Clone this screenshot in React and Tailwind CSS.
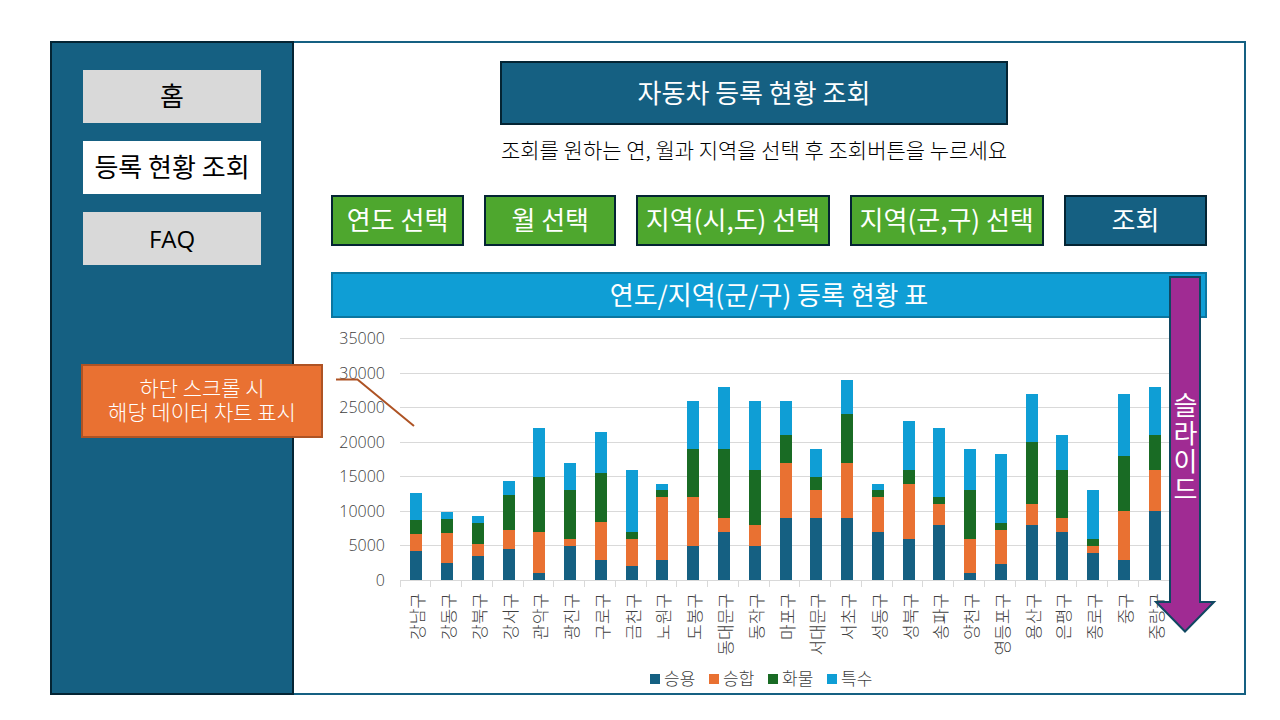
import React from "react";

const SERIES = [
  { name: "승용", color: "#156082" },
  { name: "승합", color: "#E97132" },
  { name: "화물", color: "#196B24" },
  { name: "특수", color: "#0F9ED5" },
];

const DISTRICTS = [
  ["강남구", 4300, 2400, 2000, 3900],
  ["강동구", 2500, 4400, 2000, 1000],
  ["강북구", 3500, 1800, 3000, 1000],
  ["강서구", 4500, 2800, 5000, 2000],
  ["관악구", 1000, 6000, 8000, 7000],
  ["광진구", 5000, 1000, 7000, 4000],
  ["구로구", 3000, 5500, 7000, 6000],
  ["금천구", 2000, 4000, 1000, 9000],
  ["노원구", 3000, 9000, 1000, 1000],
  ["도봉구", 5000, 7000, 7000, 7000],
  ["동대문구", 7000, 2000, 10000, 9000],
  ["동작구", 5000, 3000, 8000, 10000],
  ["마포구", 9000, 8000, 4000, 5000],
  ["서대문구", 9000, 4000, 2000, 4000],
  ["서초구", 9000, 8000, 7000, 5000],
  ["성동구", 7000, 5000, 1000, 1000],
  ["성북구", 6000, 8000, 2000, 7000],
  ["송파구", 8000, 3000, 1000, 10000],
  ["양천구", 1000, 5000, 7000, 6000],
  ["영등포구", 2300, 5000, 1000, 10000],
  ["용산구", 8000, 3000, 9000, 7000],
  ["은평구", 7000, 2000, 7000, 5000],
  ["종로구", 4000, 1000, 1000, 7000],
  ["중구", 3000, 7000, 8000, 9000],
  ["중랑구", 10000, 6000, 5000, 7000],
];

const STEPS = [0, 5000, 10000, 15000, 20000, 25000, 30000, 35000];

const PLOT = { left: 70, right: 839, top: 20, bottom: 262 };
const SLOT = (PLOT.right - PLOT.left) / DISTRICTS.length;
const scale = (v) => PLOT.bottom - (v / 35000) * (PLOT.bottom - PLOT.top);
const lineY = (v) => Math.round(scale(v));
const barY = (v) => Math.round(scale(v) + 0.3);

function RegistrationChart() {
  return (
    <svg
      viewBox="0 0 876 372"
      className="block w-full font-['Noto_Sans_CJK_KR',sans-serif]"
      role="img"
      aria-label="등록 현황 차트"
    >
      <g stroke="#D9D9D9" shapeRendering="crispEdges">
        {STEPS.map((v) => (
          <line key={v} x1={PLOT.left - 1} x2={PLOT.right} y1={lineY(v) + 0.5} y2={lineY(v) + 0.5} />
        ))}
        {Array.from({ length: DISTRICTS.length + 1 }, (_, i) => {
          const x = Math.floor(PLOT.left + i * SLOT) - 0.5;
          return <line key={i} x1={x} x2={x} y1={PLOT.bottom} y2={PLOT.bottom + 7} />;
        })}
      </g>
      <g className="font-['Open_Sans','Noto_Sans',sans-serif] text-[16px] font-light" fill="#404040" textAnchor="end">
        {STEPS.map((v) => (
          <text key={v} x={54} y={lineY(v) + 6}>
            {v}
          </text>
        ))}
      </g>
      {DISTRICTS.map(([name, ...values], i) => {
        const center = PLOT.left + (i + 0.5) * SLOT;
        const x = Math.round(center - 6);
        let sum = 0;
        return (
          <g key={name}>
            {values.map((v, s) => {
              const base = barY(sum);
              sum += v;
              const top = barY(sum);
              return <rect key={s} x={x} y={top} width="12" height={base - top} fill={SERIES[s].color} />;
            })}
            <text
              className="text-[17px] font-light"
              fill="#404040"
              textAnchor="end"
              transform={`translate(${x + 14} 275) rotate(-90)`}
            >
              {name}
            </text>
          </g>
        );
      })}
      {SERIES.map((s, i) => (
        <g key={s.name}>
          <rect x={319 + i * 59} y="356" width="10" height="10" fill={s.color} />
          <text className="text-[17px] font-light" fill="#404040" x={333 + i * 59} y="367">
            {s.name}
          </text>
        </g>
      ))}
    </svg>
  );
}

function NavItem({ active, children }) {
  return (
    <a
      href="#"
      aria-current={active ? "page" : undefined}
      className={`flex h-[53px] items-center justify-center pb-1 text-[26px] whitespace-nowrap text-black ${
        active ? "bg-white" : "bg-[#D9D9D9]"
      }`}
    >
      {children}
    </a>
  );
}

function Picker({ label, options }) {
  return (
    <select
      aria-label={label}
      defaultValue=""
      className="h-[51px] w-full min-w-0 cursor-pointer appearance-none rounded-none border-2 border-[#042433] bg-[#4EA72E] pb-1 text-center text-[26px] text-white"
    >
      <option value="">{label}</option>
      {options.map((o) => (
        <option key={o}>{o}</option>
      ))}
    </select>
  );
}

export default function App() {
  return (
    <div className="flex min-h-screen bg-white pt-[41px] pr-[34px] pb-[25px] pl-[50px] font-['Noto_Sans_CJK_KR',sans-serif]">
      <aside className="relative w-[244px] shrink-0 border-2 border-[#042433] bg-[#156082] px-[31px] pt-[27px]">
        <nav className="flex flex-col gap-[18px]">
          <NavItem>홈</NavItem>
          <NavItem active>등록 현황 조회</NavItem>
          <NavItem>
            <span className="pt-1 font-['Open_Sans','Noto_Sans',sans-serif] text-2xl">FAQ</span>
          </NavItem>
        </nav>
        <div className="absolute top-[321px] left-[29px] z-10 flex h-[74px] w-[242px] items-center justify-center border-2 border-[#AE5324] bg-[#E97132] pb-1 text-center text-[21px] leading-[24px] font-light whitespace-nowrap text-white">
          <p>
            하단 스크롤 시
            <br />
            해당 데이터 차트 표시
          </p>
        </div>
        <svg
          className="absolute top-[334px] left-[284px] z-10"
          width="80"
          height="52"
          viewBox="0 0 80 52"
          fill="none"
          aria-hidden="true"
        >
          <path d="M0 2.5H21.5L78 49" stroke="#AE5324" strokeWidth="2" />
        </svg>
      </aside>

      <main className="min-w-0 flex-1 border-2 border-l-0 border-[#156082] px-[37px] pt-[18px]">
        <header className="flex flex-col items-center pr-[30px]">
          <h1 className="flex h-16 w-[508px] items-center justify-center border-2 border-[#042433] bg-[#156082] pb-1 text-[26px] text-white">
            자동차 등록 현황 조회
          </h1>
          <p className="mt-[10px] text-[21px] leading-[28px] font-light whitespace-nowrap text-black">
            조회를 원하는 연, 월과 지역을 선택 후 조회버튼을 누르세요
          </p>
        </header>

        <form
          className="mt-[32px] grid grid-cols-[133fr_132fr_193fr_194fr_143fr] gap-5"
          onSubmit={(e) => e.preventDefault()}
        >
          <Picker label="연도 선택" options={["2022", "2023", "2024"]} />
          <Picker label="월 선택" options={["1월", "2월", "3월", "4월", "5월", "6월"]} />
          <Picker label="지역(시,도) 선택" options={["서울", "경기", "인천"]} />
          <Picker label="지역(군,구) 선택" options={DISTRICTS.map((d) => d[0])} />
          <button
            type="submit"
            className="h-[51px] cursor-pointer border-2 border-[#042433] bg-[#156082] pb-1 text-[26px] text-white"
          >
            조회
          </button>
        </form>

        <section className="relative mt-[26px]">
          <h2 className="flex h-[46px] items-center justify-center border-2 border-[#0B76A0] bg-[#0F9ED5] pb-1 text-[26px] text-white">
            연도/지역(군/구) 등록 현황 표
          </h2>
          <RegistrationChart />
          <div className="absolute top-[4px] -right-[10px] h-[358px] w-[64px]">
            <svg className="block" width="64" height="358" viewBox="0 0 64 358" aria-hidden="true">
              <path
                d="M17 1H47V326H61L32 355.5L3 326H17Z"
                fill="#A02B93"
                stroke="#104862"
                strokeWidth="2"
              />
            </svg>
            <p className="absolute inset-x-0 top-[116px] flex items-center justify-start gap-[2px] text-[26px] leading-[64px] text-white [text-orientation:upright] [writing-mode:vertical-rl]">
              {["슬", "라", "이", "드"].map((c) => (
                <span key={c}>{c}</span>
              ))}
            </p>
          </div>
        </section>
      </main>
    </div>
  );
}
